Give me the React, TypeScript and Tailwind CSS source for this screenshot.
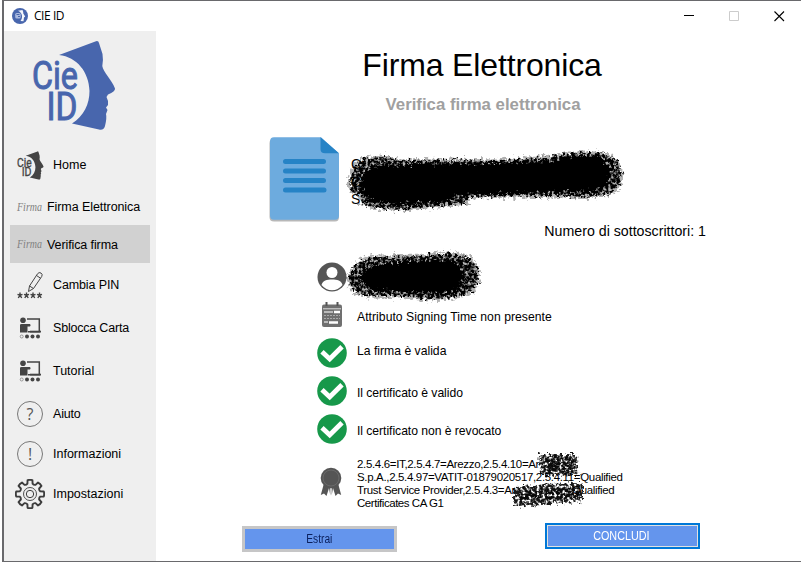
import type { ReactNode } from "react";

function CieLogo({ color, className }: { color: string; className: string }) {
  return (
    <svg viewBox="32 40 84 91" className={className} fill={color}>
      <path d="M59 55 L96 41.2 Q98.500 40.500 99 43 L102.500 54 Q103.500 60 102.300 66 C103 72 112 80 115 88.500 Q115.500 91.500 108 94.500 L106.500 97 L108 101 L108 105 L106 107.500 L107.500 110 L106 114 Q107 118 105 126 Q104 130.500 99 129.500 L72 123.500 C84 116 89.500 104 89.500 91 C89 72 77 57 59 55Z" />
      <text fontFamily="Roboto" fontSize="39" stroke={color} strokeWidth="1">
        <tspan x="32" y="89" textLength="46" lengthAdjust="spacingAndGlyphs">Cie</tspan>
        <tspan x="46.500" y="120" textLength="31" lengthAdjust="spacingAndGlyphs">ID</tspan>
      </text>
    </svg>
  );
}

function AppBadge() {
  return (
    <svg viewBox="0 0 16 16" className="h-4 w-4">
      <circle cx="8" cy="8" r="8" fill="#4866ad" />
      <path d="M6 2.800L10.500 2Q11.500 4 11.300 5.500L13.200 8.500L12 9.500L11.500 13.200L8.500 13C11.500 9 10 4.500 6 2.800Z" fill="#f3f6fc" />
      <rect x="3.200" y="5" width="5.500" height="5.500" rx="1.500" fill="#a9b9df" />
      <path d="M4.500 6.500h3M6 8.500h2" stroke="#4866ad" />
    </svg>
  );
}

function Signature() {
  return (
    <svg viewBox="0 0 30 20" className="h-5 w-[30px]">
      <text x="2" y="14" fontFamily="Liberation Serif" fontStyle="italic" fontSize="12" fill="#808080" textLength="25" lengthAdjust="spacingAndGlyphs">Firma</text>
    </svg>
  );
}

function PinIcon() {
  return (
    <svg viewBox="0 0 28 28" className="h-7 w-7" fill="none" stroke="#444" strokeWidth="1">
      <path d="M12.500 20.500L13.500 15L21.500 2.800Q23 .8 25 2Q27 3.500 25.700 5.500L17.500 17.500L12.500 20.500ZM13.500 15L17.500 17.500M20.500 4.500L24.500 7.200" />
      <path strokeWidth="1.400" d="M4 21.500v3M1.500 23.300l2.500 .9l2.500 -.9M2.300 27l1.700-2.800l1.700 2.800M10.500 21.500v3M8 23.300l2.500 .9l2.500 -.9M8.800 27l1.700-2.800l1.700 2.800M17 21.500v3M14.500 23.300l2.500 .9l2.500 -.9M15.300 27l1.700-2.800l1.700 2.800M23.500 21.500v3M21 23.300l2.500 .9l2.500 -.9M21.800 27l1.700-2.800l1.700 2.800" />
    </svg>
  );
}

function TeacherIcon() {
  return (
    <svg viewBox="0 0 22 22" className="h-[22px] w-[22px]" fill="#444">
      <circle cx="4" cy="3.200" r="2.800" />
      <path d="M1 8Q1 7 2.500 7H11Q12.300 8 11 9.500H8.500V15.500H1Z" />
      <path d="M8 2H20.300V14.800H9" fill="none" stroke="#444" strokeWidth="1.500" />
      <path d="M11 13.700h11v1.800h-11z" />
      <circle cx="2.700" cy="19.500" r="1.500" fill="none" stroke="#777" strokeWidth=".7" />
      <circle cx="8" cy="19.500" r="2" />
      <circle cx="13.500" cy="19.500" r="2" />
      <circle cx="19" cy="19.500" r="2" />
    </svg>
  );
}

function CircleSign({ sign }: { sign: string }) {
  return (
    <span className="flex h-[26px] w-[26px] items-center justify-center rounded-full border border-[#777] font-['Open_Sans'] text-[16px] leading-none text-[#555]">
      {sign}
    </span>
  );
}

function Gear() {
  const teeth = [0, 45, 90, 135, 180, 225, 270, 315];
  const at = (r: number, deg: number) => {
    const a = (deg * Math.PI) / 180;
    return `${(15 + r * Math.sin(a)).toFixed(2)} ${(15 - r * Math.cos(a)).toFixed(2)}`;
  };
  const d = teeth
    .map((t, i) => `${i ? "L" : "M"}${at(10.7, t - 14)}L${at(14, t - 10)}Q${at(14.6, t)} ${at(14, t + 10)}L${at(10.7, t + 14)}Q${at(9.6, t + 22.5)} ${at(10.7, t + 31)}`)
    .join("");
  return (
    <svg viewBox="0 0 30 30" className="h-[30px] w-[30px]" fill="none" stroke="#3c3c3c">
      <path d={d + "Z"} strokeWidth="1.900" strokeLinejoin="round" />
      <circle cx="15" cy="15" r="6.500" strokeWidth=".9" />
      <circle cx="15" cy="15" r="3.700" strokeWidth="1" />
    </svg>
  );
}

function DocumentIcon() {
  return (
    <svg viewBox="0 0 72 88" className="h-[88px] w-[72px]">
      <path d="M5 3H52L70 19V81Q70 85.500 66 85.500H5Q.5 85.500 .5 81V7Q.5 3 5 3Z" fill="#888" opacity=".6" />
      <path d="M5 1.200H52L70 17.500V79.500Q70 83.700 66 83.700H5Q1 83.700 1 79.500V5.500Q1 1.200 5 1.200Z" fill="#6dabde" />
      <path d="M51.500 1.200L70 17.300H56Q51.500 17.300 51.500 13Z" fill="#2683c6" />
      <path d="M16.500 25.500H54.500M16.500 35H54.500M16.500 44.500H54.500M16.500 54H55" stroke="#2683c6" strokeWidth="5" strokeLinecap="round" />
    </svg>
  );
}

function Person() {
  return (
    <svg viewBox="0 0 30 30" className="h-[30px] w-[30px]">
      <circle cx="15" cy="15" r="14.500" fill="#555" />
      <circle cx="15" cy="10.500" r="5.500" fill="#fff" />
      <path d="M4.500 23C5.500 18.500 10 17.500 15 17.500S24.500 18.500 25.500 23Q21 28.300 15 28.300T4.500 23Z" fill="#fff" />
    </svg>
  );
}

function Calendar() {
  return (
    <svg viewBox="0 0 22 26" className="h-[26px] w-[22px]">
      <rect x="1" y="2.500" width="20" height="22.500" rx="2" fill="#707070" />
      <path d="M5.500 0v4M16.500 0v4" stroke="#555" strokeWidth="2" />
      <path d="M2 6.800H20" stroke="#ddd" />
      <path d="M3 10h9M3 20h4" stroke="#bbb" strokeWidth="2" />
      <path d="M13 10h6M8 20.500h9" stroke="#fff" strokeWidth="2.500" />
      <path d="M3 13.500h16M3 16.500h16" stroke="#aaa" strokeDasharray="2 1" />
    </svg>
  );
}

function Check() {
  return (
    <svg viewBox="0 0 30 30" className="h-[30px] w-[30px]">
      <circle cx="15" cy="15" r="14.800" fill="#17984a" />
      <path d="M5 13.700L12.700 21L25 8.700" fill="none" stroke="#fff" strokeWidth="4.800" />
    </svg>
  );
}

function Ribbon() {
  return (
    <svg viewBox="0 0 22 30" className="h-[30px] w-[22px]" fill="#555">
      <path d="M3.500 18L.8 28L4 26.500L6.500 29L9 21L10.300 28.500V20H11.700V28.500L13 21L15.500 29L18 26.500L21.200 28L18.500 18Z" />
      <circle cx="11" cy="11" r="10.300" />
      <circle cx="11" cy="11" r="8" fill="none" stroke="#777" strokeWidth=".6" />
    </svg>
  );
}

const FILE_MARK = "M350 180L355 165L366 158L385 157L400 161L450 160L500 161L550 157L570 153L600 153L615 159L622 172L619 187L608 194L585 197L560 196L520 196L470 197L465 203L440 206L400 209L375 208L362 203L360 195L351 192Z";
const NAME_MARK = "M348 278L357 263L370 257L385 257L420 256L450 253L468 257L477 267L478 282L472 292L455 297L430 299L400 296L365 296L353 290Z";

function Marks() {
  return (
    <svg viewBox="0 0 801 562" className="pointer-events-none absolute top-0 left-0 h-[562px] w-[801px]">
      <defs>
        <filter id="rough" x="-10%" y="-20%" width="120%" height="140%">
          <feTurbulence type="fractalNoise" baseFrequency=".3" numOctaves="2" seed="4" result="n" />
          <feDisplacementMap in="SourceGraphic" in2="n" scale="12" xChannelSelector="R" yChannelSelector="G" result="d" />
          <feGaussianBlur in="d" stdDeviation=".7" />
        </filter>
        <filter id="grain" x="-10%" y="-20%" width="120%" height="140%">
          <feTurbulence type="fractalNoise" baseFrequency=".35" numOctaves="2" seed="9" result="n" />
          <feColorMatrix in="n" type="matrix" values="0 0 0 0 0 0 0 0 0 0 0 0 0 0 0 0 0 0 4 -1.200" result="a" />
          <feDisplacementMap in="SourceGraphic" in2="n" scale="10" xChannelSelector="R" yChannelSelector="G" result="d" />
          <feComposite in="d" in2="a" operator="in" result="c" />
          <feGaussianBlur in="c" stdDeviation=".6" />
        </filter>
      </defs>
      <g filter="url(#rough)" opacity=".3" stroke="#000" strokeWidth="3">
        <path d={FILE_MARK} />
        <path d={NAME_MARK} />
      </g>
      <g filter="url(#grain)">
        <path d={FILE_MARK} />
        <path d={NAME_MARK} />
      </g>
      <g filter="url(#grain)" opacity=".9">
        <path d="M539 454H576L579 474L560 476H540Z" />
        <path d="M513 487L545 484L583 483V501L555 504L513 507Z" />
      </g>
      <g filter="url(#rough)">
        <path d="M360 182L366 171L380 166L450 164L550 162L572 157L602 157L608 166L609 182L600 190L520 193L460 195L440 202L400 204L374 202L363 194Z" />
        <path d="M360 279L370 267L390 263L450 260L459 264L463 277L459 287L450 293L400 292L370 289Z" />
      </g>
      <g filter="url(#grain)" opacity=".6">
        <path d="M543 457H574V472H545ZM520 490L578 488V497L520 501Z" />
      </g>
    </svg>
  );
}

function MenuItem({ icon, label, className, labelClass = "" }: { icon: ReactNode; label: string; className: string; labelClass?: string }) {
  return (
    <div className={`flex shrink-0 items-center ${className}`}>
      <span className="flex w-10 shrink-0 justify-center">{icon}</span>
      <span className={`whitespace-nowrap text-[12.5px] leading-4 ${labelClass}`}>{label}</span>
    </div>
  );
}

function Result({ icon, text, className, textClass = "" }: { icon: ReactNode; text: ReactNode; className: string; textClass?: string }) {
  return (
    <div className={`ml-[160.5px] flex items-center ${className}`}>
      <span className="flex w-[30px] shrink-0 justify-center">{icon}</span>
      <span className={`ml-[10.5px] whitespace-nowrap text-[12.2px] leading-4 ${textClass}`}>{text}</span>
    </div>
  );
}

export default function App() {
  return (
    <div className="relative h-[562px] w-[801px] overflow-hidden bg-white pl-[2px] font-['Liberation_Sans',sans-serif] text-black">
      <div className="flex h-[562px] flex-col border-y border-l-2 border-[#69696c]">
        <header className="flex h-[30px] shrink-0 items-center pl-2">
          <AppBadge />
          <span className="ml-[6px] font-['Open_Sans'] text-[12px] leading-4 tracking-[-0.45px]">CIE ID</span>
          <div className="mr-[16px] ml-auto flex items-center gap-[35px]">
            <svg className="h-[11px] w-[10px]" viewBox="0 0 10 11"><path d="M0 4.500H10" stroke="#000" /></svg>
            <svg className="h-[11px] w-[10px]" viewBox="0 0 10 11"><path d="M.5 .5H9.500V9.500H.5Z" fill="none" stroke="#ccc" /></svg>
            <svg className="h-[11px] w-[11px]" viewBox="0 0 11 11"><path d="M.5 .5L10 10M10 .5L.5 10" stroke="#000" strokeWidth="1.100" /></svg>
          </div>
        </header>
        <div className="flex min-h-0 flex-1">
          <nav className="flex w-[152px] shrink-0 flex-col bg-[#efefef] px-[6px]">
            <div className="h-[110px] shrink-0 pt-[9px] pl-[22px]">
              <CieLogo color="#4866ad" className="h-[91px] w-[84px]" />
            </div>
            <MenuItem className="h-12" icon={<CieLogo color="#444" className="h-[29px] w-[27px]" />} label="Home" labelClass="ml-[3px]" />
            <MenuItem className="h-9" icon={<Signature />} label="Firma Elettronica" labelClass="-ml-[3px] tracking-[-0.08px]" />
            <MenuItem className="h-[38px] bg-[#d1d1d1]" icon={<Signature />} label="Verifica firma" labelClass="-ml-[3px] pt-[2px] tracking-[-0.1px]" />
            <MenuItem className="h-11" icon={<PinIcon />} label="Cambia PIN" labelClass="ml-[3px] tracking-[-0.12px]" />
            <MenuItem className="h-[42px]" icon={<TeacherIcon />} label="Sblocca Carta" labelClass="ml-[3px] tracking-[-0.2px]" />
            <MenuItem className="h-11" icon={<TeacherIcon />} label="Tutorial" labelClass="ml-[3px]" />
            <MenuItem className="h-[42px]" icon={<CircleSign sign="?" />} label="Aiuto" labelClass="ml-[3px] tracking-[-0.2px]" />
            <MenuItem className="h-[38px]" icon={<CircleSign sign="!" />} label="Informazioni" labelClass="ml-[3px]" />
            <MenuItem className="h-[42px]" icon={<Gear />} label="Impostazioni" labelClass="ml-[3px]" />
          </nav>
          <main className="min-w-0 flex-1">
            <h1 className="pt-[16px] pl-[7px] text-center text-[32px] leading-[36px] tracking-[-0.15px]">Firma Elettronica</h1>
            <h2 className="mt-[12px] pl-[9px] text-center text-[16.800px] leading-5 font-bold text-[#a0a0a0]">Verifica firma elettronica</h2>
            <div className="mt-[21px] ml-[113px] flex h-[88px]">
              <DocumentIcon />
              <div className="mt-[20px] ml-[10px] text-[14px] leading-[17.500px]">
                <div>C:</div>
                <div>C</div>
                <div>S</div>
              </div>
            </div>
            <div className="-mt-[2px] mr-[95px] text-right text-[14.200px] leading-[18px]">Numero di sottoscrittori: 1</div>
            <Result className="mt-[18px] h-[38px]" icon={<Person />} text="" />
            <Result className="h-[38px]" icon={<Calendar />} text="Attributo Signing Time non presente" textClass="pt-[3px] tracking-[0.03px]" />
            <Result className="h-[38px]" icon={<Check />} text="La firma è valida" textClass="pb-[4px]" />
            <Result className="h-[38px]" icon={<Check />} text="Il certificato è valido" textClass="pt-[4px] tracking-[-0.05px]" />
            <Result className="h-[38px]" icon={<Check />} text="Il certificato non è revocato" textClass="pt-[4px] tracking-[-0.05px]" />
            <div className="mt-[10px] ml-[160px] flex h-[52px]">
              <span className="mt-[9px] flex w-[30px] justify-center"><Ribbon /></span>
              <div className="ml-[11px] text-[11.500px] leading-[13px] tracking-[-0.34px] whitespace-nowrap">
                <div>2.5.4.6=IT,2.5.4.7=Arezzo,2.5.4.10=Ar</div>
                <div>S.p.A.,2.5.4.97=VATIT-01879020517,2.5.4.11=Qualified</div>
                <div>Trust Service Provider,2.5.4.3=Ar<span className="ml-[57px]">Qualified</span></div>
                <div className="tracking-[-0.45px]">Certificates CA G1</div>
              </div>
            </div>
            <div className="mt-[13px] ml-[86px] flex items-start gap-[148px]">
              <button className="mt-[3px] flex h-[26px] w-[155px] items-center justify-center border-[3px] border-[#c6c6c7] bg-[#6495ed] text-[12px] text-[#0a1f5c]">
                <span className="-ml-px scale-x-85">Estrai</span>
              </button>
              <button className="h-[26px] w-[155px] border-2 border-[#0078d7] bg-[#e1e1e1] p-px text-[12px] text-white">
                <span className="flex h-full items-center justify-center bg-[#6495ed]"><span className="-ml-[3px] scale-x-90">CONCLUDI</span></span>
              </button>
            </div>
          </main>
        </div>
      </div>
      <Marks />
    </div>
  );
}
